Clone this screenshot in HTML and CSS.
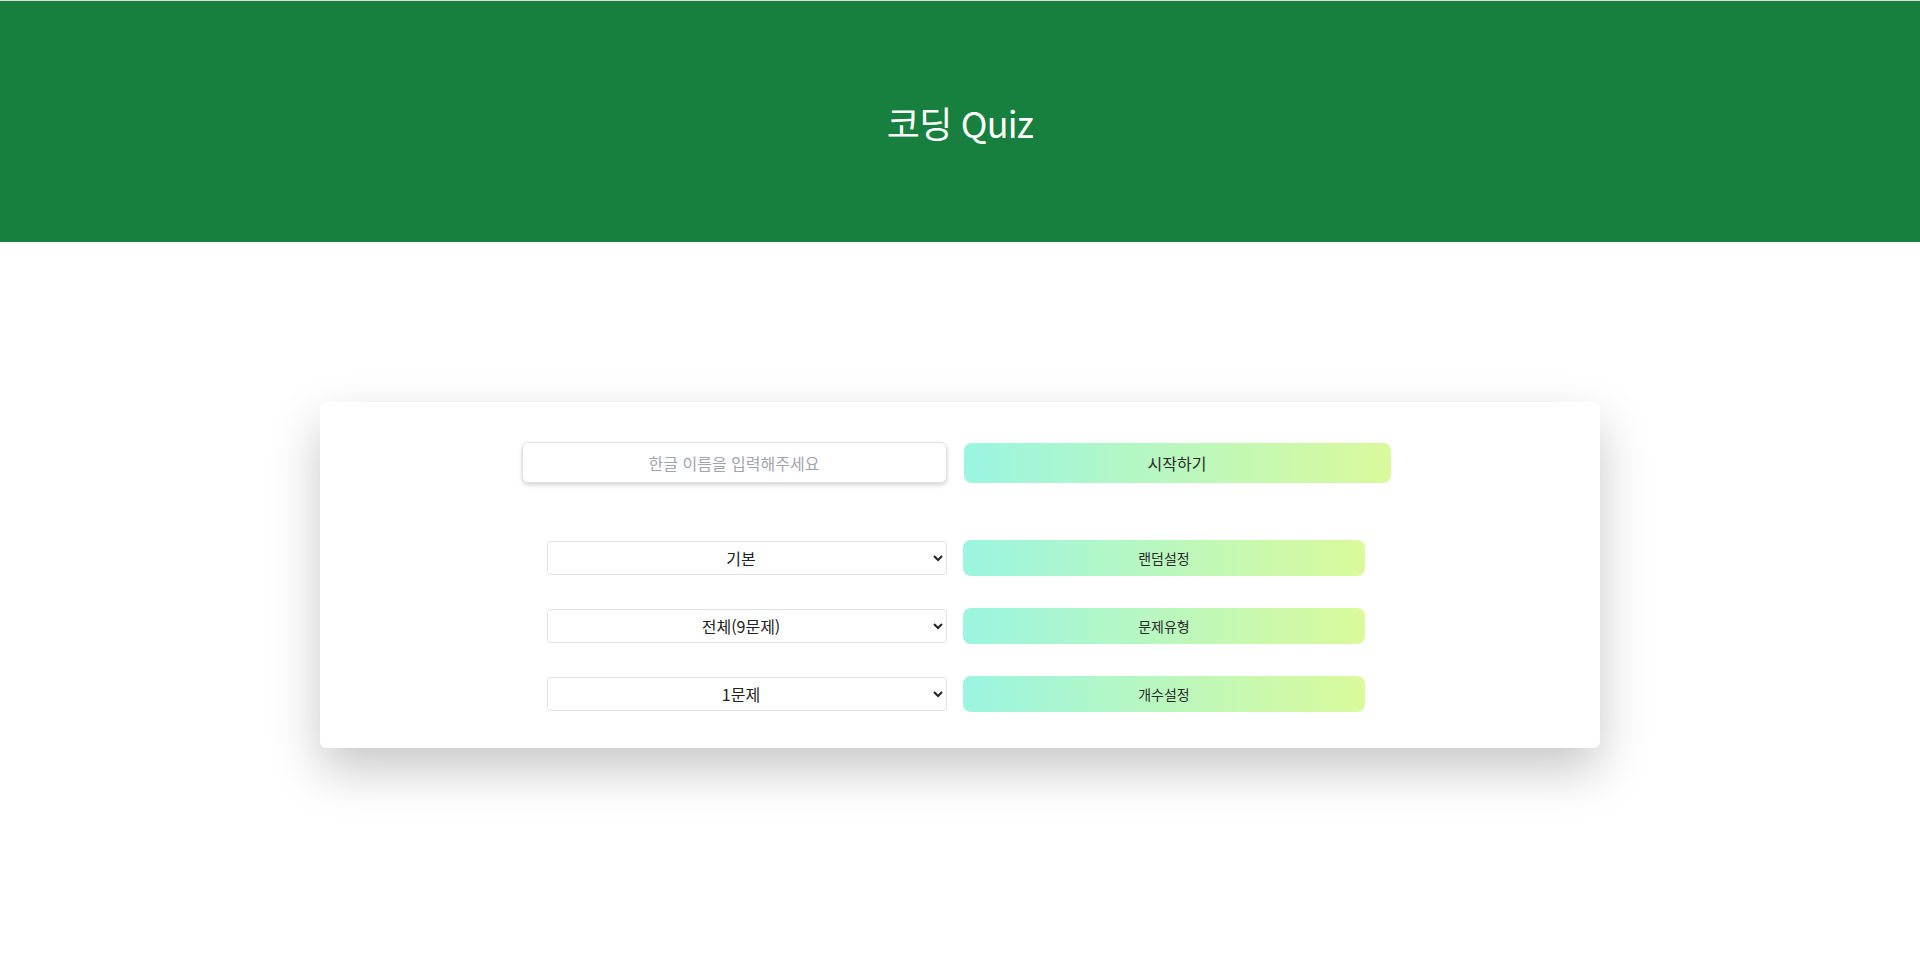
FILE: index.html
```html
<!DOCTYPE html>
<html lang="ko">
<head>
<meta charset="utf-8">
<title>코딩 Quiz</title>
<link rel="stylesheet" href="styles.css">
</head>
<body>
<header class="header">
  <h1 class="title">코딩 Quiz</h1>
</header>
<main class="main">
  <section class="card">
    <div class="name-row">
      <input class="name-input" type="text" placeholder="한글 이름을 입력해주세요">
      <button class="btn btn-start">시작하기</button>
    </div>
    <div class="options">
      <div class="opt-row">
        <select class="opt-select"><option>기본</option></select>
        <button class="btn btn-small">랜덤설정</button>
      </div>
      <div class="opt-row">
        <select class="opt-select"><option>전체(9문제)</option></select>
        <button class="btn btn-small">문제유형</button>
      </div>
      <div class="opt-row">
        <select class="opt-select"><option>1문제</option></select>
        <button class="btn btn-small">개수설정</button>
      </div>
    </div>
  </section>
</main>
</body>
</html>
```
FILE: styles.css
```css
* { box-sizing: border-box; }
html, body {
  margin: 0;
  padding: 0;
  background: #ffffff;
  font-family: "Noto Sans CJK KR", "Noto Sans", sans-serif;
}
body {
  min-height: 960px;
}
.header {
  border-top: 1px solid #dcdcdc;
  background: #17803f;
  height: 242px;
  display: flex;
  align-items: center;
  justify-content: center;
}
.title {
  margin: 0;
  color: #ffffff;
  font-size: 36px;
  font-weight: 400;
  letter-spacing: -0.8px;
}
.main {
  padding: 160px 0 150px;
}
.card {
  width: 1280px;
  margin: 0 auto;
  background: #ffffff;
  border-radius: 6px;
  box-shadow: 0 22px 50px rgba(0, 0, 0, 0.22);
  padding: 40px 0 36px;
}
.name-row {
  display: flex;
  justify-content: center;
  align-items: center;
  gap: 17px;
  padding-right: 8px;
}
.name-input {
  width: 425px;
  height: 41px;
  border: 1px solid #e2e2e2;
  border-radius: 6px;
  box-shadow: 0 2px 4px rgba(0, 0, 0, 0.18);
  text-align: center;
  font-family: inherit;
  font-size: 16px;
  color: #333;
  outline: none;
}
.name-input::placeholder {
  color: #a3a3b0;
}
.btn {
  border: none;
  background: linear-gradient(to right, #9af5e1, #dafa9b);
  color: #2b2b2b;
  font-family: inherit;
  cursor: pointer;
}
.btn-start {
  width: 427px;
  height: 40px;
  border-radius: 8px;
  font-size: 16px;
}
.options {
  margin-top: 57px;
  display: flex;
  flex-direction: column;
  gap: 32px;
}
.opt-row {
  display: flex;
  justify-content: center;
  align-items: center;
  gap: 16px;
  height: 36px;
  padding-right: 8px;
}
.opt-select {
  width: 400px;
  height: 34px;
  border: 1px solid #e2e2e2;
  border-radius: 4px;
  background: #ffffff;
  font-family: inherit;
  font-size: 16px;
  color: #222;
  text-align: center;
  text-align-last: center;
}
.btn-small {
  width: 402px;
  height: 36px;
  border-radius: 8px;
  font-size: 14px;
}
```
